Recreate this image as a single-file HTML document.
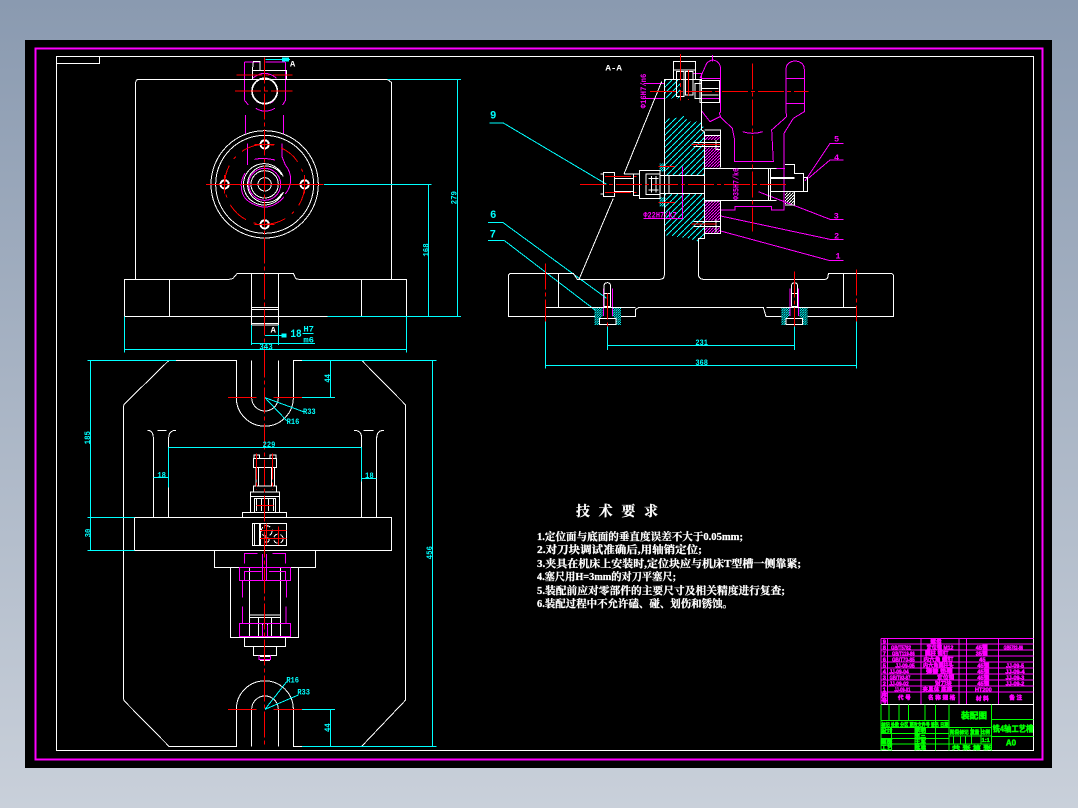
<!DOCTYPE html>
<html><head><meta charset="utf-8"><style>
html,body{margin:0;padding:0;width:1078px;height:808px;overflow:hidden;background:#9aa8ba}
svg{display:block}
svg *{vector-effect:non-scaling-stroke}
pattern *{vector-effect:none}
.w{stroke:#fff;fill:none}.c{stroke:#0ff;fill:none}.m{stroke:#f0f;fill:none}.g{stroke:#0f0;fill:none}
.r{stroke:#f00;fill:none;stroke-dasharray:26 3 4 3}.rs{stroke:#f00;fill:none}
text{stroke:none;font-family:"Liberation Mono","Noto Sans CJK SC",monospace;font-weight:bold}
.tc{fill:#0ff}.tm{fill:#f0f}.tw{fill:#fff}.tg{fill:#0f0}
.cj{font-family:"Liberation Serif","Noto Serif CJK SC",serif;font-weight:bold;fill:#fff;stroke:#fff;stroke-width:.25}
.b{font-family:"Liberation Sans","Noto Sans CJK SC",sans-serif;font-weight:bold;font-size:17px;text-anchor:middle}
g.tm .b{stroke:#f0f;stroke-width:.5}
g.tg .b{stroke:#0f0;stroke-width:.5}
</style></head><body>
<svg width="1078" height="808" viewBox="0 0 1078 808" xmlns="http://www.w3.org/2000/svg" shape-rendering="crispEdges">
<defs>
<linearGradient id="bg" x1="0" y1="0" x2="0" y2="1"><stop offset="0" stop-color="#8a9ab0"/><stop offset="1" stop-color="#c9d0da"/></linearGradient>
<pattern id="hc" patternUnits="userSpaceOnUse" width="18" height="18"><path d="M-2,20 L20,-2" stroke="#0ff" stroke-width="3" fill="none"/></pattern>
<pattern id="hd" patternUnits="userSpaceOnUse" width="7" height="7"><path d="M-1,8 L8,-1" stroke="#0ff" stroke-width="3" fill="none"/></pattern>
<pattern id="hm" patternUnits="userSpaceOnUse" width="9" height="9"><path d="M-1,10 L10,-1" stroke="#f0f" stroke-width="3" fill="none"/></pattern>
<pattern id="hw" patternUnits="userSpaceOnUse" width="9" height="9"><path d="M-1,10 L10,-1" stroke="#fff" stroke-width="3" fill="none"/></pattern>
</defs>
<rect width="1078" height="808" fill="url(#bg)"/>
<rect x="25" y="40" width="1027" height="728" fill="#000"/>
<rect x="35.5" y="48.5" width="1007" height="711" fill="none" stroke="#f0f" stroke-width="2"/>
<rect x="56.5" y="56.5" width="977" height="694" fill="none" stroke="#fff"/>
<path d="M56.5,63.5 H99.5 V56.5" fill="none" stroke="#fff"/>

<!-- top view -->
<g transform="translate(100,50) scale(.33333)">
<g class="m">
<path d="M433,36 H480 M497,36 H555 M433,36 V150 L445,165 M557,36 V150 L548,165 M468,175 Q494,192 525,175 M470,155 Q494,168 520,155 M437,195 V250 M550,195 V250 M443,280 V345 M546,280 V320 L556,345 M458,85 Q494,55 530,85"/>
<circle cx="494" cy="403" r="48"/>
<path d="M463,328 Q494,322 525,330 M556,345 A68,68 0 0 1 556,432 M435,370 A68,68 0 0 0 432,440 Q450,465 494,472 Q530,468 552,440"/>
</g>
<g class="w">
<path d="M107,688 V98 Q107,88 117,88 H862 L875,98 V688"/>
<path d="M73,799 V688 H385 Q400,688 403,680 L412,670 H580 L587,685 Q590,688 600,688 H919 V799 Z"/>
<path d="M208,688 V799 M784,688 V799 M454,670 V825 H535 V670 M454,772 H535 M454,778 H535 M454,820 H535"/>
<circle cx="494" cy="403" r="161"/><circle cx="494" cy="403" r="147"/>
<circle cx="494" cy="283" r="14"/><circle cx="374" cy="403" r="14"/><circle cx="614" cy="403" r="14"/><circle cx="494" cy="523" r="14"/>
<circle cx="494" cy="283" r="11"/><circle cx="374" cy="403" r="11"/><circle cx="614" cy="403" r="11"/><circle cx="494" cy="523" r="11"/>
<circle cx="494" cy="403" r="20"/><circle cx="494" cy="403" r="41"/>
<path d="M550,380 A62,62 0 1 0 550,426 M545,375 A55,55 0 1 0 545,431"/>
<circle cx="494" cy="123" r="39"/><circle cx="494" cy="123" r="37"/>
<path d="M457,88 V62 L460,35 H480 V62 M457,62 H560 V88"/>
</g>
<g class="rs">
<circle cx="494" cy="403" r="120" stroke-dasharray="22 8 3 8"/>
<path d="M318,403 H670 M464,283 H524 M374,375 V430 M614,375 V430 M464,523 H524"/>
</g>
<path class="r" d="M494,22 V930 M410,75 H578 M405,123 H578"/>
<g class="c">
<path d="M497,28 H570 M672,403 H995 M985,403 V799 M862,88 H1083 M1072,88 V799 M682,799 H1083 M73,799 V908 M919,799 V908 M73,898 H919 M454,825 V885 M535,825 V885 M454,880 H645 M495,856 H560 M608,851 H640"/>
<rect x="548" y="24" width="18" height="9" fill="#0ff"/><rect x="546" y="852" width="12" height="9" fill="#0ff"/>
</g>
<text class="tw" x="570" y="50" font-size="26">A</text>
<text class="tw" x="512" y="848" font-size="26">A</text>
<text class="tc" x="478" y="898" font-size="28" textLength="40" lengthAdjust="spacingAndGlyphs">343</text>
<text class="tc" transform="translate(1070,463) rotate(-90)" font-size="26" textLength="40" lengthAdjust="spacingAndGlyphs">279</text>
<text class="tc" transform="translate(985,620) rotate(-90)" font-size="26" textLength="40" lengthAdjust="spacingAndGlyphs">168</text>
<text class="tc" x="571" y="861" font-size="32" textLength="34" lengthAdjust="spacingAndGlyphs">18</text>
<text class="tc" x="610" y="845" font-size="26" textLength="32" lengthAdjust="spacingAndGlyphs">H7</text>
<text class="tc" x="610" y="878" font-size="26" textLength="32" lengthAdjust="spacingAndGlyphs">m6</text>
</g>

<!-- plan view -->
<g transform="translate(70,350) scale(.33333)">
<g class="w">
<path d="M297,31 H499 V143 A85.5,85.5 0 0 0 670,143 V31 H875 L1007,165 V1050 L875,1189 H670 V1078 A85.5,85.5 0 0 0 499,1078 V1189 H297 L165,1055 Q160,1050 160,1040 V175 Q160,165 165,160 Z"/>
<path d="M545,31 V143 A40,40 0 0 0 625,143 V31 M545,1189 V1078 A40,40 0 0 1 625,1078 V1189"/>
<path d="M232,241 Q250,241 250,265 V502 M296,502 V265 Q296,241 318,241 M262,241 H290 M852,241 Q875,241 875,265 V502 M920,502 V265 Q920,241 942,241 M880,241 H910"/>
<rect x="193" y="502" width="772" height="99"/>
<path d="M433,601 V653 H737 V601 M481,653 V862 H686 V653 M523,862 V890 H647 V862 M550,890 V917 H620 V890 M583,890 V917 M570,920 H600 M570,931 H600"/>
<path d="M538,653 V862 M632,653 V862 M540,795 H632 M540,803 H632 M565,803 V860 M605,803 V860 M578,820 V860 M592,820 V860"/>
<rect x="550" y="325" width="70" height="28"/>
<path d="M558,353 V408 M565,353 V408 M605,353 V408 M613,353 V408 M552,325 V315 H568 V325 M600,325 V315 H618 V325"/>
<rect x="550" y="408" width="70" height="18"/><rect x="541" y="426" width="88" height="14"/>
<path d="M541,440 V487 M629,440 V487 M560,447 V483 M575,447 V483 M595,447 V483 M610,447 V483"/>
<rect x="553" y="445" width="64" height="42"/><rect x="517" y="487" width="133" height="15"/>
<rect x="547" y="520" width="103" height="67"/>
<path d="M553,520 V587 M568,520 V587 M572,520 V587"/>
<circle cx="590" cy="543" r="16" stroke-dasharray="5 3"/><circle cx="625" cy="566" r="14" stroke-dasharray="5 3"/><circle cx="590" cy="570" r="7"/>
</g>
<g class="m">
<path d="M523,640 V610 H562 M608,610 H647 V640 M578,612 V690 M590,612 V690 M524,690 V665 H575 M597,665 H647 V690 M518,690 V742 M650,690 V742 M518,770 V820 M648,770 V820 M567,917 V928 H602 V917 M578,825 V860 M592,825 V860"/>
<rect x="508" y="652" width="154" height="40"/><rect x="508" y="820" width="154" height="40"/>
</g>
<path class="r" d="M584,5 V1190 M559,310 V420 M608,310 V420"/>
<path class="rs" d="M474,143 H560 M610,143 H696 M474,1078 H560 M610,1078 H696 M570,541 H650 M570,566 H650 M590,520 V585 M625,530 V585 M560,467 H610"/>
<g class="c">
<path d="M52,31 H318 M696,31 H1100 M62,31 V600 M52,502 H193 M52,601 H193 M1088,31 V1189 M696,1189 H1100 M696,143 H795 M781,31 V143 M696,1078 H795 M781,1078 V1189 M585,143 L700,185 M585,143 L650,212 M585,1078 L650,995 M585,1078 L685,1035 M296,293 H875 M296,293 V412 M875,293 V395 M250,383 H296 M875,385 H920"/>
</g>
<g class="tc" font-size="26">
<text class="tc" transform="translate(60,283) rotate(-90)" font-size="26" textLength="40" lengthAdjust="spacingAndGlyphs">185</text>
<text class="tc" transform="translate(61,562) rotate(-90)" font-size="26" textLength="26" lengthAdjust="spacingAndGlyphs">30</text>
<text class="tc" transform="translate(1086,628) rotate(-90)" font-size="26" textLength="40" lengthAdjust="spacingAndGlyphs">456</text>
<text class="tc" transform="translate(780,98) rotate(-90)" font-size="26" textLength="26" lengthAdjust="spacingAndGlyphs">44</text>
<text class="tc" transform="translate(780,1146) rotate(-90)" font-size="26" textLength="26" lengthAdjust="spacingAndGlyphs">44</text>
<text class="tc" x="699" y="192" font-size="26" textLength="38" lengthAdjust="spacingAndGlyphs">R33</text>
<text class="tc" x="650" y="222" font-size="26" textLength="38" lengthAdjust="spacingAndGlyphs">R16</text>
<text class="tc" x="649" y="997" font-size="26" textLength="38" lengthAdjust="spacingAndGlyphs">R16</text>
<text class="tc" x="682" y="1033" font-size="26" textLength="38" lengthAdjust="spacingAndGlyphs">R33</text>
<text class="tc" x="578" y="291" font-size="26" textLength="38" lengthAdjust="spacingAndGlyphs">229</text>
<text class="tc" x="262" y="382" font-size="26" textLength="26" lengthAdjust="spacingAndGlyphs">18</text>
<text class="tc" x="885" y="384" font-size="26" textLength="26" lengthAdjust="spacingAndGlyphs">18</text>
</g>
</g>

<!-- section A-A -->
<g transform="translate(480,50) scale(.33333)">
<path d="M553,88 H600 V145 H553 Z" fill="url(#hc)"/>
<path d="M553,205 L585,205 L610,195 L625,215 L665,215 L673,240 V376 H553 Z" fill="url(#hc)"/>
<path d="M553,430 H673 V565 L655,575 L625,565 L553,555 Z" fill="url(#hc)"/>
<path d="M343,772 H368 V800 L358,805 V825 H343 Z M398,772 H423 V825 H408 V805 L398,800 Z M904,772 H928 V800 L918,805 V825 H904 Z M958,772 H983 V825 H968 V805 L958,800 Z" fill="url(#hd)"/>
<path d="M538,340 H556 V365 H538 Z M538,442 H556 V470 H538 Z" fill="url(#hd)"/>
<path d="M675,292 H722 V352 H675 Z M675,258 H722 V270 H675 Z M675,455 H722 V512 H675 Z M675,532 H722 V550 H675 Z" fill="url(#hm)"/>
<path d="M915,428 H943 V462 H915 Z" fill="url(#hw)"/>
<g class="m">
<path d="M660,85 L680,40 Q690,30 700,30 Q722,35 722,60 V185 L718,190 L722,200 M697,15 V35 M665,85 H722 M665,145 H722 M665,183 L690,215 L720,200 L757,235 L763,265 V335 H880 L875,240 L920,200 L918,185 V60 Q918,35 945,33 Q973,35 973,60 V185 L940,205 L912,250 V330 M918,85 H973 M918,160 H973 M788,245 Q818,255 848,245"/>
<path d="M722,451 V465 M722,480 H765 V470 H875 V480 H912 V325 M890,355 H915"/>
<path d="M975,393 L1050,280 H1090 M985,385 L1050,330 H1090 M835,425 L1050,508 H1090 M722,498 L1050,568 H1090 M722,543 L1050,632 H1090"/>
<path d="M490,100 H553 M490,145 H553 M607,350 V505 H490 M370,715 V798 M398,715 V798 M930,715 V798 M956,715 V798 M640,70 H665 V100"/>
</g>
<g class="c">
<path d="M28,219 H70 L380,403 M24,517 H68 L380,745 M24,571 H72 L345,780 M196,815 V956 M1129,815 V956 M196,946 H1129 M382,830 V900 M943,830 V900 M382,886 H943"/>
</g>
<g class="w">
<path d="M85,680 Q85,670 95,670 H280 L292,688 H540 Q553,688 553,675 V88 H665 V240 L673,245 V565 H655 V670 Q655,688 670,688 H1035 Q1045,688 1045,670 H1230 Q1241,670 1241,680 V800 H983 M905,800 H858 L850,772 H477 L467,778 V800 H423 M345,800 H85 V680"/>
<path d="M236,670 V772 M1090,670 V772 M197,772 H467 M860,772 H1129 M545,95 L432,372 M400,445 L297,688"/>
<rect x="580" y="35" width="67" height="25"/>
<path d="M580,60 V88 M647,60 V88 H665"/>
<rect x="590" y="65" width="22" height="75"/><rect x="617" y="65" width="22" height="70"/>
<rect x="660" y="92" width="58" height="66"/><path d="M665,115 H716 M665,135 H716 M645,100 H665 V145 H645 Z"/>
<path d="M673,355 H890 M673,451 H890 M865,355 V451 M872,355 V451 M915,343 H943 V370 H971 V425 H943 V465 H915 M873,383 H943 M873,386 H943 M873,425 H943 M971,383 H983 V425 H971"/>
<path d="M553,376 H673 M553,430 H673 M567,376 V430"/>
<rect x="478" y="361" width="62" height="85"/><rect x="460" y="372" width="18" height="64"/>
<path d="M403,385 H460 M403,425 H460 M432,372 H460"/>
<rect x="370" y="367" width="34" height="72"/>
<rect x="498" y="372" width="42" height="62"/><path d="M505,385 H535 M505,420 H535 M515,378 V428 M528,378 V428"/>
<path d="M362,372 H372 M362,432 H372 M540,376 H567 V430 H540"/>
<path d="M673,240 H722 V352 M673,257 H722 M673,453 H722 V550 H673 M640,277 H722 M640,290 H722 M708,270 V298 H722 M640,515 H722 M640,530 H722 M708,508 V548"/>
<path d="M372,770 V710 Q372,698 382,698 Q392,698 392,710 V770 H372 M372,730 H392 M934,770 V710 Q934,698 943,698 Q953,698 953,710 V770 H934 M934,730 H953"/>
<rect x="358" y="805" width="50" height="18"/><rect x="918" y="805" width="50" height="18"/>
</g>
<path class="r" d="M300,403 H920 M510,125 H985 M817,40 V545 M601,12 V152 M625,60 V150 M197,640 V815 M1129,658 V815 M382,730 V830 M943,665 V830 M375,380 H470 M375,427 H470"/>
<path class="rs" d="M535,349 H585 M535,457 H585 M635,284 H720 M635,522 H710"/>
<text class="tw" x="376" y="62" font-size="26" textLength="50" lengthAdjust="spacingAndGlyphs">A-A</text>
<text class="tc" x="30" y="205" font-size="32">9</text>
<text class="tc" x="30" y="504" font-size="32">6</text>
<text class="tc" x="29" y="563" font-size="32">7</text>
<text class="tc" x="646" y="885" font-size="26" textLength="38" lengthAdjust="spacingAndGlyphs">231</text>
<text class="tc" x="646" y="945" font-size="26" textLength="38" lengthAdjust="spacingAndGlyphs">368</text>
<text class="tm" x="1062" y="275" font-size="26">5</text>
<text class="tm" x="1062" y="330" font-size="26">4</text>
<text class="tm" x="1061" y="505" font-size="26">3</text>
<text class="tm" x="1062" y="565" font-size="26">2</text>
<text class="tm" x="1066" y="625" font-size="26">1</text>
<text class="tm" x="490" y="503" font-size="26" textLength="100" lengthAdjust="spacingAndGlyphs">Φ22H7/k7</text>
<text class="tm" transform="translate(498,175) rotate(-90)" font-size="26" textLength="104" lengthAdjust="spacingAndGlyphs">Φ16H7/n6</text>
<text class="tm" transform="translate(775,450) rotate(-90)" font-size="26" textLength="96" lengthAdjust="spacingAndGlyphs">Φ35H7/k6</text>
</g>

<!-- requirements -->
<text class="cj" x="576" y="516" font-size="14" textLength="82">技 术 要 求</text>
<text class="cj" x="537" y="540" font-size="10.5" textLength="206" lengthAdjust="spacingAndGlyphs">1.定位面与底面的垂直度误差不大于0.05mm;</text>
<text class="cj" x="537" y="553" font-size="10.5" textLength="165" lengthAdjust="spacingAndGlyphs">2.对刀块调试准确后,用轴销定位;</text>
<text class="cj" x="537" y="567" font-size="10.5" textLength="264" lengthAdjust="spacingAndGlyphs">3.夹具在机床上安装时,定位块应与机床T型槽一侧靠紧;</text>
<text class="cj" x="537" y="580" font-size="10.5" textLength="139" lengthAdjust="spacingAndGlyphs">4.塞尺用H=3mm的对刀平塞尺;</text>
<text class="cj" x="537" y="594" font-size="10.5" textLength="248" lengthAdjust="spacingAndGlyphs">5.装配前应对零部件的主要尺寸及相关精度进行复查;</text>
<text class="cj" x="537" y="607" font-size="10.5" textLength="196" lengthAdjust="spacingAndGlyphs">6.装配过程中不允许磕、碰、划伤和锈蚀。</text>

<!-- title block -->
<g transform="translate(875,630) scale(.33333)">
<path class="m" d="M18,25 H475 M18,42 H475 M18,60 H475 M18,78 H475 M18,96 H475 M18,114 H475 M18,132 H475 M18,150 H475 M18,168 H475 M18,186 H475 M18,25 V222 M38,25 V222 M138,25 V222 M252,25 V222 M274,25 V222 M370,25 V222"/>
<path class="w" d="M18,223 H475"/>
<path class="g" d="M18,224 V362 M42,224 V272 M72,224 V272 M100,224 V272 M150,224 V272 M182,224 V362 M222,224 V362 M50,292 V362 M120,292 V362 M18,272 H222 M18,292 H222 M18,310 H222 M18,342 H222 M18,325 H222 M222,292 H350 M222,318 H350 M222,342 H350 M350,224 V362 M350,268 H475 M350,320 H475 M290,292 V342 M235,318 V342 M257,318 V342 M272,318 V342 M318,292 V342"/>
<g class="tm">
<text class="b" x="28" y="40">9</text><text class="b" x="28" y="58">8</text><text class="b" x="28" y="76">7</text><text class="b" x="28" y="94">6</text><text class="b" x="28" y="112">5</text><text class="b" x="28" y="130">4</text><text class="b" x="28" y="148">3</text><text class="b" x="28" y="166">2</text><text class="b" x="28" y="184">1</text>
<text class="b" x="28" y="203">序</text><text class="b" x="28" y="219">号</text>
<text class="b" x="78" y="58" textLength="60" lengthAdjust="spacingAndGlyphs">GB/T5782</text><text class="b" x="85" y="76" textLength="68" lengthAdjust="spacingAndGlyphs">GB/T119-86</text><text class="b" x="85" y="94" textLength="68" lengthAdjust="spacingAndGlyphs">GB/T70-85</text><text class="b" x="90" y="112" textLength="58" lengthAdjust="spacingAndGlyphs">JJ-09-05</text><text class="b" x="72" y="130" textLength="58" lengthAdjust="spacingAndGlyphs">JJ-09-04</text><text class="b" x="75" y="148" textLength="62" lengthAdjust="spacingAndGlyphs">GB/T93-87</text><text class="b" x="72" y="166" textLength="58" lengthAdjust="spacingAndGlyphs">JJ-09-02</text><text class="b" x="82" y="184" textLength="48" lengthAdjust="spacingAndGlyphs">JJ-09-01</text>
<text class="b" x="88" y="208">代 号</text>
<text class="b" x="183" y="40">螺母</text><text class="b" x="195" y="58" textLength="80" lengthAdjust="spacingAndGlyphs">定位键 M12</text><text class="b" x="185" y="76" textLength="70" lengthAdjust="spacingAndGlyphs">圆柱 销钉</text><text class="b" x="190" y="94" textLength="90" lengthAdjust="spacingAndGlyphs">内六角 螺钉</text><text class="b" x="190" y="112" textLength="92" lengthAdjust="spacingAndGlyphs">内六角圆柱头</text><text class="b" x="193" y="130" textLength="80" lengthAdjust="spacingAndGlyphs">弹簧 垫圈</text><text class="b" x="212" y="148">定位销</text><text class="b" x="205" y="166">对刀块</text><text class="b" x="187" y="184" textLength="90" lengthAdjust="spacingAndGlyphs">夹具体 底座</text>
<text class="b" x="200" y="208">名 称 规 格</text>
<text class="b" x="320" y="58">45钢</text><text class="b" x="320" y="76">35钢</text><text class="b" x="322" y="94">45</text><text class="b" x="325" y="112">45钢</text><text class="b" x="325" y="130">45钢</text><text class="b" x="325" y="148">45钢</text><text class="b" x="325" y="166">45钢</text><text class="b" x="325" y="184">HT200</text>
<text class="b" x="322" y="212">材 料</text>
<text class="b" x="415" y="58" textLength="58" lengthAdjust="spacingAndGlyphs">GB5782-86</text><text class="b" x="420" y="112" textLength="54" lengthAdjust="spacingAndGlyphs">JJ-09-5</text><text class="b" x="420" y="130" textLength="58" lengthAdjust="spacingAndGlyphs">JJ-09-4</text><text class="b" x="420" y="148" textLength="56" lengthAdjust="spacingAndGlyphs">JJ-09-3</text><text class="b" x="420" y="166" textLength="56" lengthAdjust="spacingAndGlyphs">JJ-09-2</text>
<text class="b" x="422" y="208">备 注</text>
</g>
<g class="tg">
<text class="b" x="297" y="266" style="font-size:26px">装配图</text>
<text class="b" x="414" y="304" style="font-size:24px" textLength="122" lengthAdjust="spacingAndGlyphs">铣4轴工艺槽</text>
<text class="b" x="408" y="346" style="font-size:24px">A0</text>
<text class="b" x="120" y="290" style="font-size:15px" textLength="200" lengthAdjust="spacingAndGlyphs">标记 处数 分区 更改文件号 签名 日期</text>
<text class="b" x="35" y="308">设计</text><text class="b" x="35" y="340">审核</text><text class="b" x="35" y="358">工艺</text>
<text class="b" x="136" y="308">李明</text><text class="b" x="136" y="322">张三</text><text class="b" x="136" y="340">王军</text><text class="b" x="136" y="358">批准</text>
<text class="b" x="285" y="312" style="font-size:16px" textLength="120" lengthAdjust="spacingAndGlyphs">阶段标记 重量 比例</text>
<text class="b" x="332" y="336">1:1</text>
<text class="b" x="290" y="358" style="font-size:16px" textLength="118" lengthAdjust="spacingAndGlyphs">共 张 第 张</text>
</g>
</g>
</svg>
</body></html>
